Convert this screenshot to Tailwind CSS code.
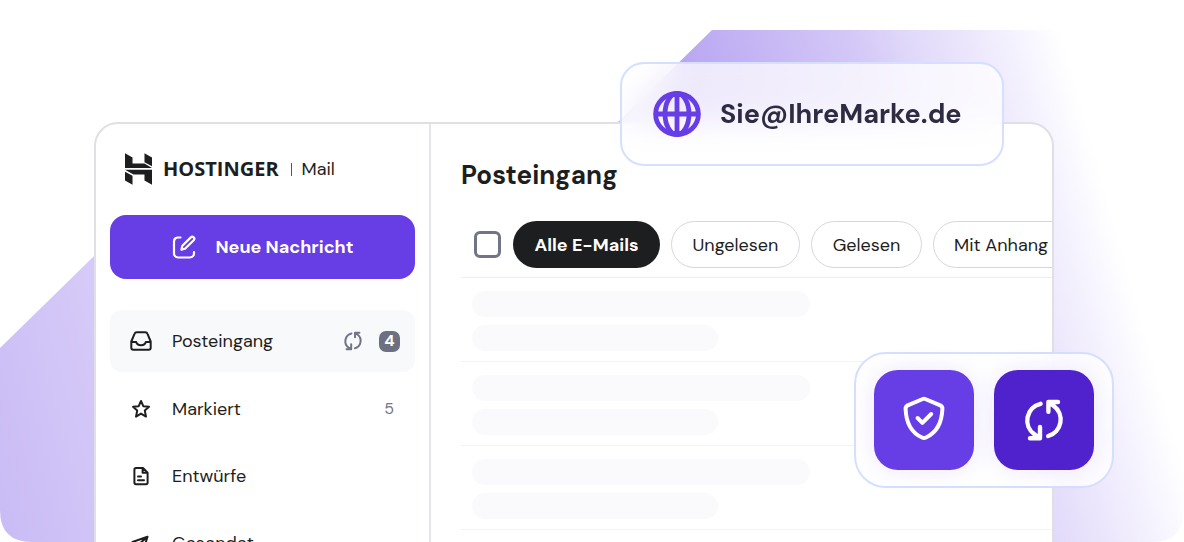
<!DOCTYPE html>
<html lang="de">
<head>
<meta charset="utf-8">
<meta name="viewport" content="width=device-width, initial-scale=1">
<title>Hostinger Mail</title>
<script src="https://cdn.jsdelivr.net/npm/@tailwindcss/browser@4"></script>
</head>
<body class="bg-white font-['DM_Sans','Inter',sans-serif] text-[#1d1e20]">
<svg class="hidden" aria-hidden="true">
  <symbol id="sync" viewBox="0 0 48 48" fill="none" stroke="currentColor" stroke-width="4.4" stroke-linecap="round" stroke-linejoin="round">
    <path d="M20.6 7.8A17.6 17.2 0 0 0 14.5 38.4L19.8 42M20 31V42.2H10M28.2 40A17.6 17.2 0 0 0 33.6 9.8L28.6 6.2M38 6H28.4V15.8"/>
  </symbol>
</svg>
<main class="relative h-screen overflow-hidden">
  <svg class="absolute inset-0 h-full w-full" viewBox="0 0 1184 542" preserveAspectRatio="xMidYMid slice" aria-hidden="true">
    <defs>
      <linearGradient id="haze" gradientUnits="userSpaceOnUse" x1="-150" y1="0" x2="965" y2="-312">
        <stop offset="0" stop-color="#c9bbf5"/>
        <stop offset=".134" stop-color="#d6caf8"/>
        <stop offset=".4" stop-color="#d6caf8"/>
        <stop offset=".674" stop-color="#b9a6f2"/>
        <stop offset=".825" stop-color="#d4c8f7"/>
        <stop offset=".8725" stop-color="#e1d9fa"/>
        <stop offset=".92" stop-color="#ece6fc"/>
        <stop offset=".965" stop-color="#f6f4fe"/>
        <stop offset="1" stop-color="#ffffff"/>
      </linearGradient>
    </defs>
    <path fill="url(#haze)" d="M0 348L230 123H617L712 30H1152Q1184 30 1184 62V510Q1184 542 1152 542H32Q0 542 0 510Z"/>
  </svg>

  <section class="relative mt-[122px] mr-[130px] ml-[94px] flex h-full overflow-hidden rounded-t-3xl border-2 border-[#dfdfe5] bg-white">
    <aside class="w-[335px] shrink-0 border-r-2 border-[#e4e4eb] px-[14px] pt-[27px]">
      <div class="flex h-9 items-center pl-[15px]">
        <svg class="h-8 w-[27px]" viewBox="45 24 79 92" fill="#1d1e20" aria-hidden="true">
          <path d="M45 24L67 36V54H102L124 67H45ZM102 24L124 36V62L102 50ZM45 72H124V116L102 104V86H70ZM45 78L67 90V116L45 104Z"/>
        </svg>
        <span class="ml-[11px] font-['Open_Sans',sans-serif] text-[20px] font-bold">HOSTINGER</span>
        <span class="ml-3 h-[13px] w-px bg-[#55565c]"></span>
        <span class="ml-[10px] text-lg">Mail</span>
      </div>
      <button type="button" class="mt-7 flex h-16 w-full items-center justify-center gap-5 rounded-2xl bg-[#673de6] text-lg font-bold text-white">
        <svg class="h-6 w-6" viewBox="0 0 24 24" fill="none" stroke="currentColor" stroke-width="2.2" stroke-linecap="round" stroke-linejoin="round" aria-hidden="true">
          <path d="M8.5 2.5H5.5A4 4 0 0 0 2 6.5V18.5A4 4 0 0 0 6 22.5H18A4 4 0 0 0 22 18.5V17M10.4 10.7L18.8 2.4A1.9 1.9 0 0 1 21.7 5.2L13 13.8L9.4 14.8Z"/>
        </svg>
        Neue Nachricht
      </button>
      <nav class="mt-[31px] flex flex-col gap-[6px] text-lg">
        <a href="#posteingang" class="flex h-[62px] items-center rounded-xl bg-[#f8f9fb] pr-[15px] pl-5">
          <svg class="h-[22px] w-[22px]" viewBox="0 0 22 22" fill="none" stroke="currentColor" stroke-width="2" stroke-linejoin="round" aria-hidden="true">
            <path d="M1.3 11.5L4.5 3.8Q5.1 2.2 6.8 2.2H15.2Q16.9 2.2 17.5 3.8L20.7 11.5V17.8Q20.7 19.8 18.7 19.8H3.3Q1.3 19.8 1.3 17.8ZM1.3 12H6.2Q7 15.2 11 15.2T15.8 12H20.7"/>
          </svg>
          <span class="ml-5">Posteingang</span>
          <svg class="ml-auto h-[22px] w-[22px] text-[#727586]" aria-hidden="true"><use href="#sync"/></svg>
          <span class="ml-[15px] flex h-[21px] w-[21px] items-center justify-center rounded-[7px] bg-[#6d7081] text-base font-bold text-white">4</span>
        </a>
        <a href="#markiert" class="flex h-[61px] items-center pr-[21px] pl-5">
          <svg class="h-[22px] w-[22px]" viewBox="0 0 22 22" fill="none" stroke="currentColor" stroke-width="2" stroke-linejoin="round" aria-hidden="true">
            <path d="M11 3L13.3 8.2L19 8.8L14.8 12.6L16 18.6L11 15.6L6 18.6L7.2 12.6L3 8.8L8.7 8.2Z"/>
          </svg>
          <span class="ml-5">Markiert</span>
          <span class="ml-auto text-base text-[#727586]">5</span>
        </a>
        <a href="#entwuerfe" class="flex h-[61px] items-center pl-5">
          <svg class="h-[22px] w-[22px]" viewBox="0 0 22 22" fill="none" stroke="currentColor" stroke-width="2" stroke-linejoin="round" stroke-linecap="round" aria-hidden="true">
            <path d="M6 3H13L17.6 7.6V17.5Q17.6 19.2 16 19.2H6Q4.4 19.2 4.4 17.5V4.7Q4.4 3 6 3ZM12.6 3.5V7.8H17M8 11.5H11M8 15.2H14"/>
          </svg>
          <span class="ml-5">Entwürfe</span>
        </a>
        <a href="#gesendet" class="flex h-[61px] items-center pl-5">
          <svg class="h-[22px] w-[22px]" viewBox="0 0 22 22" fill="none" stroke="currentColor" stroke-width="2" stroke-linejoin="round" aria-hidden="true">
            <path d="M17.5 4.8L2.5 10L8 13L13 19ZM8 13L17.5 4.8"/>
          </svg>
          <span class="ml-5">Gesendet</span>
        </a>
      </nav>
    </aside>

    <div class="min-w-0 flex-1 overflow-hidden pt-[31px] pl-[30px]">
      <h1 class="text-[26px] leading-10 font-bold">Posteingang</h1>
      <div class="mt-[26px] flex h-[57px] items-start gap-[11px] border-b border-[#ededf2] pl-[13px] text-lg whitespace-nowrap">
        <input type="checkbox" aria-label="Alle auswählen" class="mr-px mt-[10px] h-[27px] w-[27px] shrink-0 appearance-none rounded-md border-3 border-[#727586] bg-white">
        <button type="button" class="h-[47px] w-[147px] shrink-0 rounded-full bg-[#1d1e20] font-bold text-white">Alle E-Mails</button>
        <button type="button" class="h-[47px] w-[129px] shrink-0 rounded-full border border-[#d6d6e0]">Ungelesen</button>
        <button type="button" class="h-[47px] w-[111px] shrink-0 rounded-full border border-[#d6d6e0]">Gelesen</button>
        <button type="button" class="h-[47px] w-[148px] shrink-0 rounded-full border border-[#d6d6e0] pl-5 text-left">Mit Anhang</button>
      </div>
      <div class="flex h-[84px] flex-col gap-2 border-b border-[#f2f2f7] pt-[13px] pl-[11px]">
        <div class="h-[26px] w-[338px] rounded-full bg-[#fafafc]"></div>
        <div class="h-[26px] w-[246px] rounded-full bg-[#fafafc]"></div>
      </div>
      <div class="flex h-[84px] flex-col gap-2 border-b border-[#f2f2f7] pt-[13px] pl-[11px]">
        <div class="h-[26px] w-[338px] rounded-full bg-[#fafafc]"></div>
        <div class="h-[26px] w-[246px] rounded-full bg-[#fafafc]"></div>
      </div>
      <div class="flex h-[84px] flex-col gap-2 border-b border-[#f2f2f7] pt-[13px] pl-[11px]">
        <div class="h-[26px] w-[338px] rounded-full bg-[#fafafc]"></div>
        <div class="h-[26px] w-[246px] rounded-full bg-[#fafafc]"></div>
      </div>
    </div>
  </section>

  <div class="absolute top-[62px] right-[180px] flex h-[104px] w-[384px] items-center rounded-3xl border-2 border-[#d5dfff] bg-white/75 pl-[31px] backdrop-blur-lg">
    <svg class="h-12 w-12" viewBox="0 0 48 48" fill="none" stroke="#673de6" stroke-width="4.8" aria-hidden="true">
      <ellipse cx="24" cy="24" rx="21.4" ry="20.6"/><ellipse cx="24" cy="24" rx="12" ry="20.6"/><path d="M24 4V44M3 24H45"/><path d="M14 5.5Q24 -1 34 5.5Q24 9 14 5.5ZM14 42.5Q24 49 34 42.5Q24 39 14 42.5Z" fill="#673de6" stroke="none"/>
    </svg>
    <span class="ml-[19px] text-[27px] font-bold text-[#2f2b43]">Sie@IhreMarke.de</span>
  </div>

  <div class="absolute top-[352px] right-[70px] flex h-[136px] w-[260px] items-center justify-center gap-5 rounded-[32px] border-2 border-[#d5dfff] bg-white/85 backdrop-blur-lg">
    <button type="button" aria-label="Schutz" class="flex h-[100px] w-[100px] items-center justify-center rounded-3xl bg-[#673de6] text-white shadow-[0_0_24px_rgba(103,61,230,0.12)]">
      <svg class="h-12 w-12" viewBox="0 0 48 48" fill="none" stroke="currentColor" stroke-width="4" stroke-linecap="round" stroke-linejoin="round" aria-hidden="true">
        <path d="M22.8 3Q24 2.4 25.2 3L40.3 9.4Q42.5 10.5 42.4 12.7C42 25 38 36 26 41.5Q24 42.5 22 41.5C10 36 6 25 5.6 12.7Q5.5 10.5 7.7 9.4ZM17.6 22L22.4 26.8L31.2 18"/>
      </svg>
    </button>
    <button type="button" aria-label="Synchronisieren" class="flex h-[100px] w-[100px] items-center justify-center rounded-3xl bg-[#4f22ce] text-white shadow-[0_0_24px_rgba(103,61,230,0.12)]">
      <svg class="h-12 w-12" aria-hidden="true"><use href="#sync"/></svg>
    </button>
  </div>
</main>
</body>
</html>
